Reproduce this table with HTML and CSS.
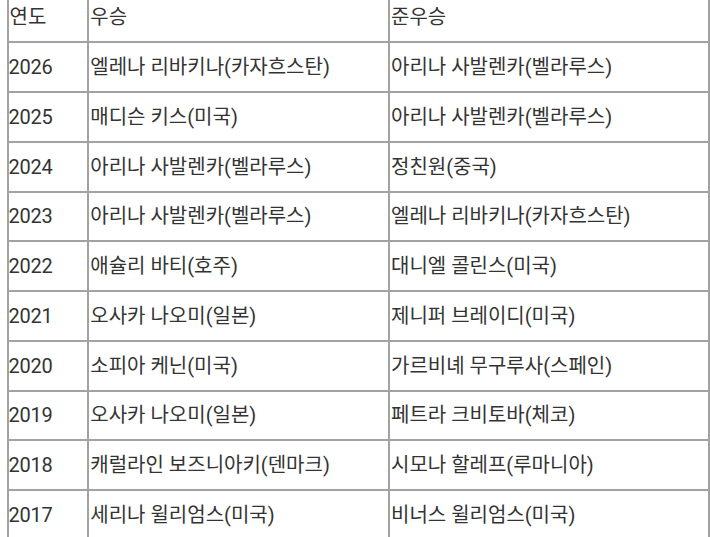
FILE: index.html
```html
<!DOCTYPE html>
<html lang="ko">
<head>
<meta charset="utf-8">
<link rel="stylesheet" href="styles.css">
</head>
<body>
<table class="results">
  <colgroup>
    <col class="c-year">
    <col class="c-win">
    <col class="c-run">
  </colgroup>
  <tr><td>연도</td><td>우승</td><td>준우승</td></tr>
  <tr><td class="year">2026</td><td>엘레나 리바키나(카자흐스탄)</td><td>아리나 사발렌카(벨라루스)</td></tr>
  <tr><td class="year">2025</td><td>매디슨 키스(미국)</td><td>아리나 사발렌카(벨라루스)</td></tr>
  <tr><td class="year">2024</td><td>아리나 사발렌카(벨라루스)</td><td>정친원(중국)</td></tr>
  <tr><td class="year">2023</td><td>아리나 사발렌카(벨라루스)</td><td>엘레나 리바키나(카자흐스탄)</td></tr>
  <tr><td class="year">2022</td><td>애슐리 바티(호주)</td><td>대니엘 콜린스(미국)</td></tr>
  <tr><td class="year">2021</td><td>오사카 나오미(일본)</td><td>제니퍼 브레이디(미국)</td></tr>
  <tr><td class="year">2020</td><td>소피아 케닌(미국)</td><td>가르비녜 무구루사(스페인)</td></tr>
  <tr><td class="year">2019</td><td>오사카 나오미(일본)</td><td>페트라 크비토바(체코)</td></tr>
  <tr><td class="year">2018</td><td>캐럴라인 보즈니아키(덴마크)</td><td>시모나 할레프(루마니아)</td></tr>
  <tr><td class="year">2017</td><td>세리나 윌리엄스(미국)</td><td>비너스 윌리엄스(미국)</td></tr>
</table>
</body>
</html>
```
FILE: styles.css
```css
html, body {
  margin: 0;
  padding: 0;
  background: #ffffff;
}
body {
  overflow: hidden;
}
.results {
  border-collapse: collapse;
  table-layout: fixed;
  width: 703px;
  margin: -8.5px 0 0 6.5px;
  font-family: Roboto, "Noto Sans CJK KR", sans-serif;
  font-size: 20px;
  color: #333333;
}
.c-year { width: 80.8px; }
.c-win { width: 300.7px; }
.c-run { width: 319.5px; }
.results tr {
  height: 49.75px;
}
.results td {
  border: 2px solid #a2a2a2;
  padding: 0 1px;
  vertical-align: middle;
  white-space: nowrap;
  line-height: 24px;
}
.results td.year {
  padding-left: 0;
  letter-spacing: -0.2px;
}
```
